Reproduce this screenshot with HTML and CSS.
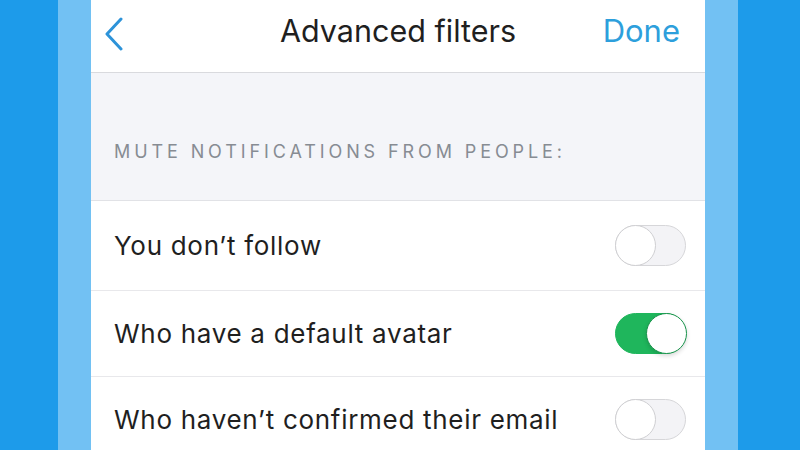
FILE: index.html
```html
<!DOCTYPE html>
<html lang="en">
<head>
    <meta charset="UTF-8">
    <meta name="viewport" content="width=device-width, initial-scale=1.0">
    <title>Advanced filters</title>
    <link rel="stylesheet" href="styles.css">
</head>
<body>
    <div class="frame">
        <div class="panel">
            <header class="nav">
                <a class="back" href="#">
                    <svg width="20" height="34" viewBox="0 0 20 34">
                        <polyline points="17,2 3,17 17,32" fill="none" stroke="#2d93d9" stroke-width="3" stroke-linecap="round" stroke-linejoin="round"/>
                    </svg>
                </a>
                <h1>Advanced filters</h1>
                <a class="done" href="#">Done</a>
            </header>

            <div class="section-head">Mute notifications from people:</div>

            <ul class="rows">
                <li class="row row-first">
                    <span>You don’t follow</span>
                    <div class="switch"><span class="knob"></span></div>
                </li>
                <li class="row">
                    <span>Who have a default avatar</span>
                    <div class="switch on"><span class="knob"></span></div>
                </li>
                <li class="row">
                    <span>Who haven’t confirmed their email</span>
                    <div class="switch"><span class="knob"></span></div>
                </li>
            </ul>
        </div>
    </div>
</body>
</html>
```

FILE: styles.css
```css
body {
    margin: 0;
    height: 450px;
    overflow: hidden;
    background-color: #1d9bea;
    font-family: Inter, 'Liberation Sans', sans-serif;
    color: #1f1f1f;
}
.frame {
    margin-left: 58px;
    width: 614px;
    height: 450px;
    padding: 0 33px;
    background-color: #72c1f3;
}
.panel {
    height: 450px;
    background-color: #fff;
}
.nav {
    display: grid;
    grid-template-columns: 1fr auto 1fr;
    align-items: start;
    height: 61px;
    padding-top: 11px;
    border-bottom: 1px solid #d9dade;
}
.back {
    justify-self: start;
    margin-left: 13px;
    margin-top: 6px;
    line-height: 0;
}
h1 {
    margin: 0;
    font-size: 30.5px;
    font-weight: normal;
    line-height: 40px;
    color: #1f1f1f;
}
.done {
    justify-self: end;
    margin-right: 25px;
    font-size: 31px;
    line-height: 40px;
    color: #2d9fdc;
    text-decoration: none;
}
.section-head {
    height: 59px;
    padding: 68px 0 0 23px;
    background-color: #f4f5f9;
    border-bottom: 1px solid #e1e2e6;
    font-size: 18px;
    line-height: 22px;
    letter-spacing: 3.9px;
    text-transform: uppercase;
    color: #878c93;
}
.rows {
    list-style: none;
    margin: 0;
    padding: 0;
}
.row {
    display: flex;
    align-items: center;
    justify-content: space-between;
    height: 85px;
    padding: 0 19px 0 23px;
    border-bottom: 1px solid #e8e8eb;
    font-size: 26px;
    line-height: 30px;
    letter-spacing: 0.7px;
}
.row-first {
    height: 89px;
}
.switch {
    display: flex;
    justify-content: flex-start;
    box-sizing: border-box;
    width: 71px;
    height: 41px;
    border: 1.5px solid #d6d6d9;
    border-radius: 21px;
    background-color: #f3f3f6;
}
.knob {
    box-sizing: border-box;
    width: 41px;
    height: 41px;
    margin: -1.5px;
    border: 1.5px solid #cfcfd2;
    border-radius: 50%;
    background-color: #fff;
}
.switch.on {
    justify-content: flex-end;
    border-color: #1fb65c;
    background-color: #1fb65c;
}
.switch.on .knob {
    border-color: #17934a;
    box-shadow: 0 2px 4px rgba(0, 0, 0, 0.15);
}
```
